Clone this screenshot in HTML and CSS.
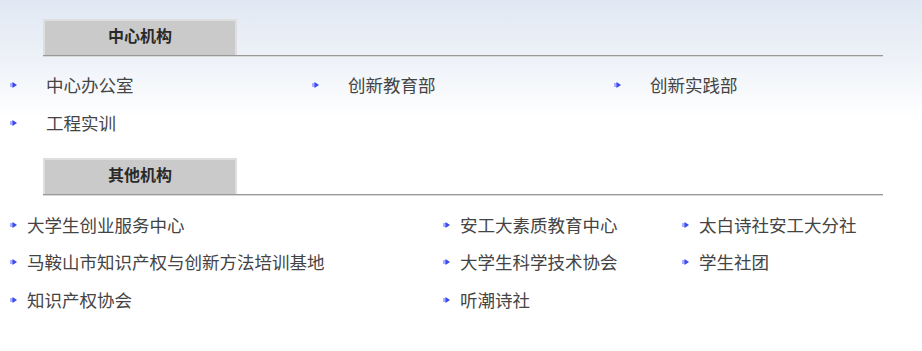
FILE: index.html
```html
<!DOCTYPE html>
<html lang="zh-CN">
<head>
<meta charset="utf-8">
<title>机构设置</title>
<link rel="stylesheet" href="styles.css">
</head>
<body>
<div class="page">
  <div class="section-head"><div class="tab">中心机构</div></div>
  <ul class="list list-center">
    <li><span class="bullet"><svg width="7" height="6" viewBox="0 0 7 6"><rect x="0" y="1" width="3" height="4" fill="#a9b0ff"/><polygon points="2.5,0 7,3 2.5,6" fill="#3a48f0"/></svg></span>中心办公室</li>
    <li><span class="bullet"><svg width="7" height="6" viewBox="0 0 7 6"><rect x="0" y="1" width="3" height="4" fill="#a9b0ff"/><polygon points="2.5,0 7,3 2.5,6" fill="#3a48f0"/></svg></span>创新教育部</li>
    <li><span class="bullet"><svg width="7" height="6" viewBox="0 0 7 6"><rect x="0" y="1" width="3" height="4" fill="#a9b0ff"/><polygon points="2.5,0 7,3 2.5,6" fill="#3a48f0"/></svg></span>创新实践部</li>
    <li><span class="bullet"><svg width="7" height="6" viewBox="0 0 7 6"><rect x="0" y="1" width="3" height="4" fill="#a9b0ff"/><polygon points="2.5,0 7,3 2.5,6" fill="#3a48f0"/></svg></span>工程实训</li>
  </ul>
  <div class="section-head second"><div class="tab">其他机构</div></div>
  <ul class="list list-other">
    <li><span class="bullet"><svg width="7" height="6" viewBox="0 0 7 6"><rect x="0" y="1" width="3" height="4" fill="#a9b0ff"/><polygon points="2.5,0 7,3 2.5,6" fill="#3a48f0"/></svg></span>大学生创业服务中心</li>
    <li><span class="bullet"><svg width="7" height="6" viewBox="0 0 7 6"><rect x="0" y="1" width="3" height="4" fill="#a9b0ff"/><polygon points="2.5,0 7,3 2.5,6" fill="#3a48f0"/></svg></span>安工大素质教育中心</li>
    <li><span class="bullet"><svg width="7" height="6" viewBox="0 0 7 6"><rect x="0" y="1" width="3" height="4" fill="#a9b0ff"/><polygon points="2.5,0 7,3 2.5,6" fill="#3a48f0"/></svg></span>太白诗社安工大分社</li>
    <li><span class="bullet"><svg width="7" height="6" viewBox="0 0 7 6"><rect x="0" y="1" width="3" height="4" fill="#a9b0ff"/><polygon points="2.5,0 7,3 2.5,6" fill="#3a48f0"/></svg></span>马鞍山市知识产权与创新方法培训基地</li>
    <li><span class="bullet"><svg width="7" height="6" viewBox="0 0 7 6"><rect x="0" y="1" width="3" height="4" fill="#a9b0ff"/><polygon points="2.5,0 7,3 2.5,6" fill="#3a48f0"/></svg></span>大学生科学技术协会</li>
    <li><span class="bullet"><svg width="7" height="6" viewBox="0 0 7 6"><rect x="0" y="1" width="3" height="4" fill="#a9b0ff"/><polygon points="2.5,0 7,3 2.5,6" fill="#3a48f0"/></svg></span>学生社团</li>
    <li><span class="bullet"><svg width="7" height="6" viewBox="0 0 7 6"><rect x="0" y="1" width="3" height="4" fill="#a9b0ff"/><polygon points="2.5,0 7,3 2.5,6" fill="#3a48f0"/></svg></span>知识产权协会</li>
    <li><span class="bullet"><svg width="7" height="6" viewBox="0 0 7 6"><rect x="0" y="1" width="3" height="4" fill="#a9b0ff"/><polygon points="2.5,0 7,3 2.5,6" fill="#3a48f0"/></svg></span>听潮诗社</li>
  </ul>
</div>
</body>
</html>
```

FILE: styles.css
```css
html {
  background: linear-gradient(to bottom, #e1e8f3 0px, #eef2f8 60px, #ffffff 118px) no-repeat, #ffffff;
}
body {
  margin: 8px;
  font-family: "Noto Sans CJK SC", "Liberation Sans", sans-serif;
  color: #444444;
}
.page {
  width: 906px;
}
.section-head {
  margin-left: 35px;
  width: 840px;
  padding-top: 11px;
  border-bottom: 1px solid #999999;
  box-shadow: 0 1px 0 #d8d8d8;
}
.section-head.second {
  padding-top: 16px;
}
.tab {
  width: 190px;
  height: 34px;
  box-sizing: content-box;
  background: #cacaca;
  border-top: 2px solid #dedede;
  border-left: 2px solid #dedede;
  border-right: 2px solid #dedede;
  font-weight: 700;
  font-size: 16px;
  line-height: 28px;
  text-align: center;
  color: #2a2a2a;
  overflow: hidden;
}
.list {
  list-style: none;
  margin: 0;
  padding: 0;
  display: grid;
  font-size: 17.5px;
}
.list li {
  display: flex;
  align-items: center;
  white-space: nowrap;
  line-height: 34px;
}
.list-center {
  grid-template-columns: 302px 302px 302px;
  grid-auto-rows: 38px;
  padding-top: 10px;
}
.list-center .bullet {
  width: 38px;
}
.list-other {
  grid-template-columns: 433px 239px 1fr;
  grid-auto-rows: 37.5px;
  padding-top: 11px;
}
.list-other .bullet {
  width: 19px;
}
.bullet {
  flex: none;
  display: flex;
  align-items: center;
  padding-left: 2px;
  box-sizing: border-box;
  align-self: stretch;
}
.bullet svg {
  display: block;
}
```
